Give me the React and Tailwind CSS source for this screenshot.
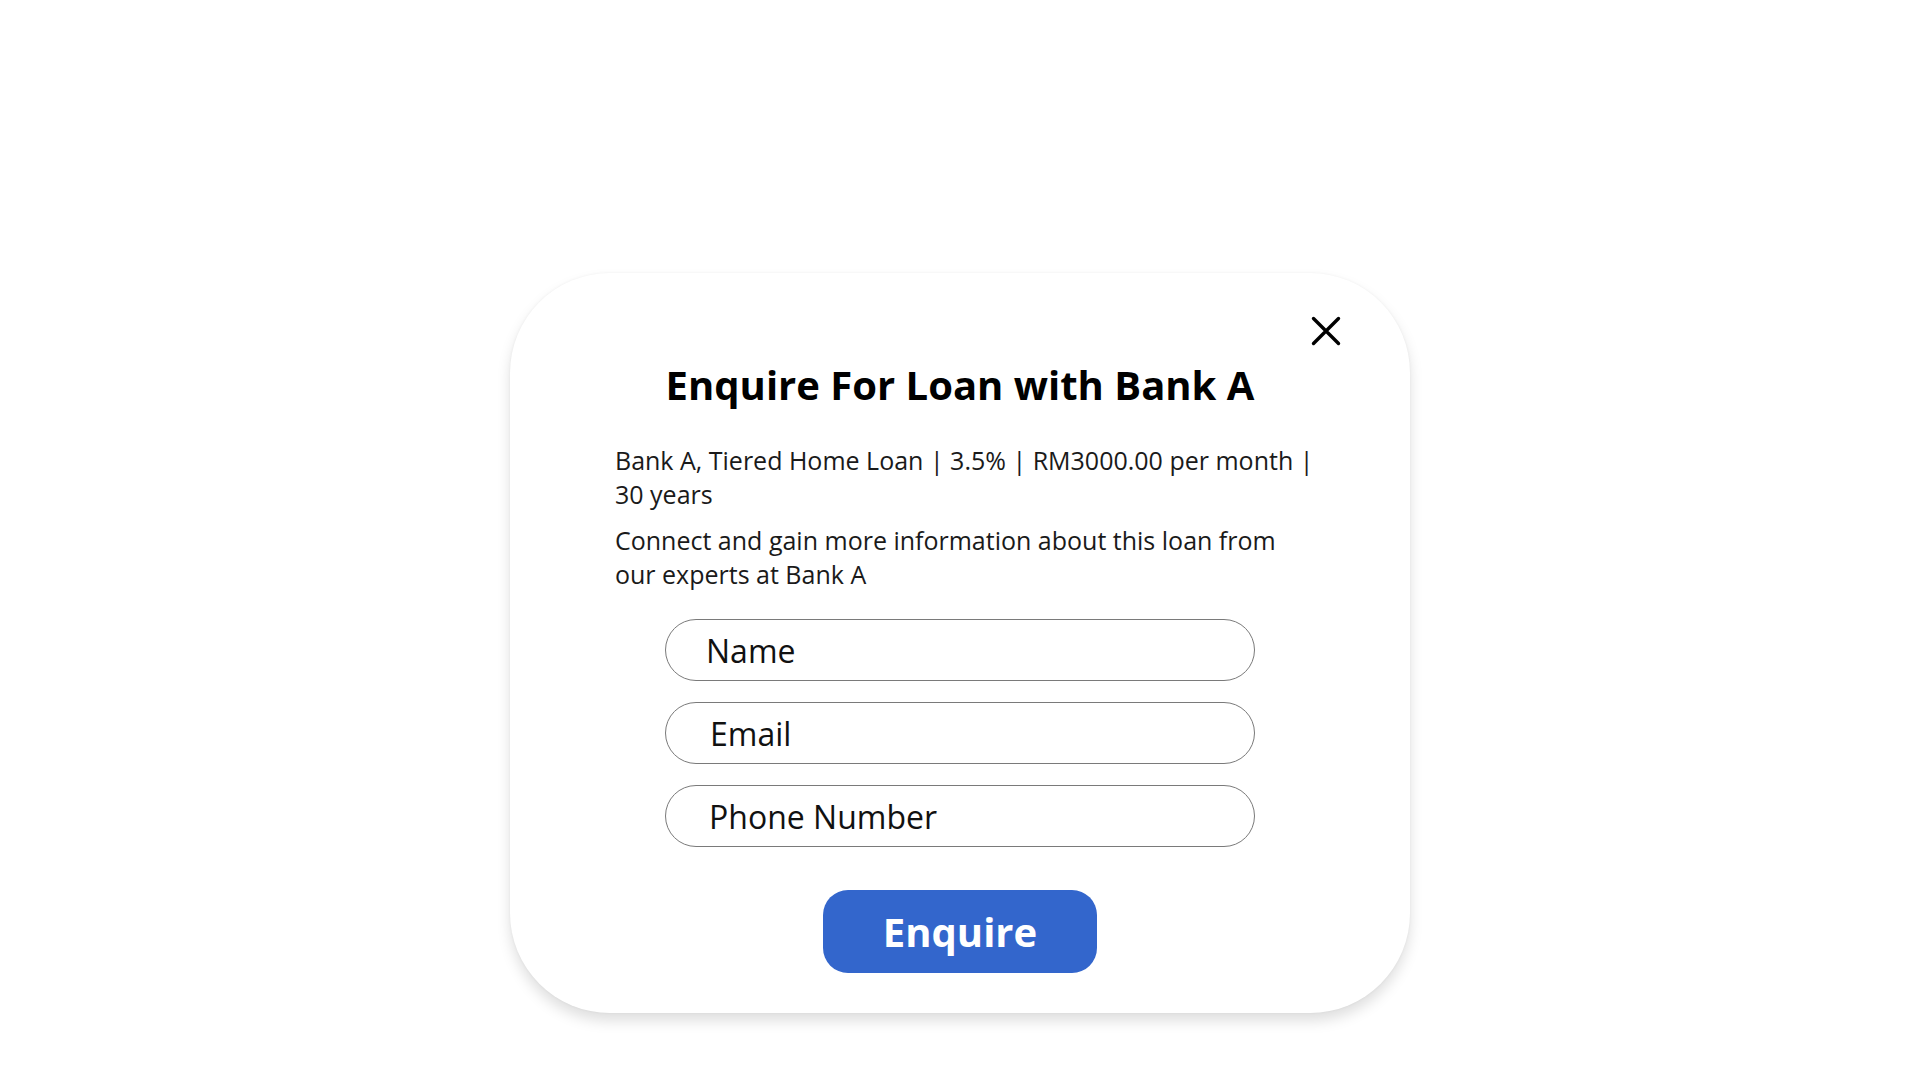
function Field({ label, pad }) {
  return (
    <div className={`h-[62px] w-[590px] rounded-full border border-[#7a7a7a] flex items-center pt-[2px] ${pad}`}>
      <span className="text-[32px] text-[#111]">{label}</span>
    </div>
  );
}

export default function App() {
  return (
    <div className="min-h-screen w-full bg-white flex justify-center pt-[273px] font-['Open_Sans',sans-serif]">
      <div className="relative w-[900px] h-[740px] rounded-[100px] bg-white shadow-[0_8px_14px_rgba(0,0,0,0.13),0_0_3px_rgba(0,0,0,0.05)] flex flex-col items-center pt-[88px]">
        <button className="absolute top-[43px] right-[69px]">
          <svg width="30" height="30" viewBox="0 0 30 30" fill="none" stroke="#000" strokeWidth="3.4" strokeLinecap="round">
            <path d="M2.5 2.5 L27.5 27.5 M27.5 2.5 L2.5 27.5" />
          </svg>
        </button>
        <h1 className="text-[40px] leading-[48px] font-bold text-black">Enquire For Loan with Bank A</h1>
        <div className="self-start ml-[105px] w-[705px] mt-[34px] text-[25px] leading-[34px] text-[#1a1a1a]">
          <p>Bank A, Tiered Home Loan | 3.5% | RM3000.00 per month | 30 years</p>
          <p className="mt-[12px]">Connect and gain more information about this loan from our experts at Bank A</p>
        </div>
        <div className="mt-[28px] flex flex-col gap-[21px]">
          <Field label="Name" pad="pl-[40px]" />
          <Field label="Email" pad="pl-[44px]" />
          <Field label="Phone Number" pad="pl-[43px]" />
        </div>
        <button className="mt-[43px] w-[274px] h-[83px] rounded-[25px] bg-[#3366cc] text-white text-[40px] font-bold">
          Enquire
        </button>
      </div>
    </div>
  );
}
